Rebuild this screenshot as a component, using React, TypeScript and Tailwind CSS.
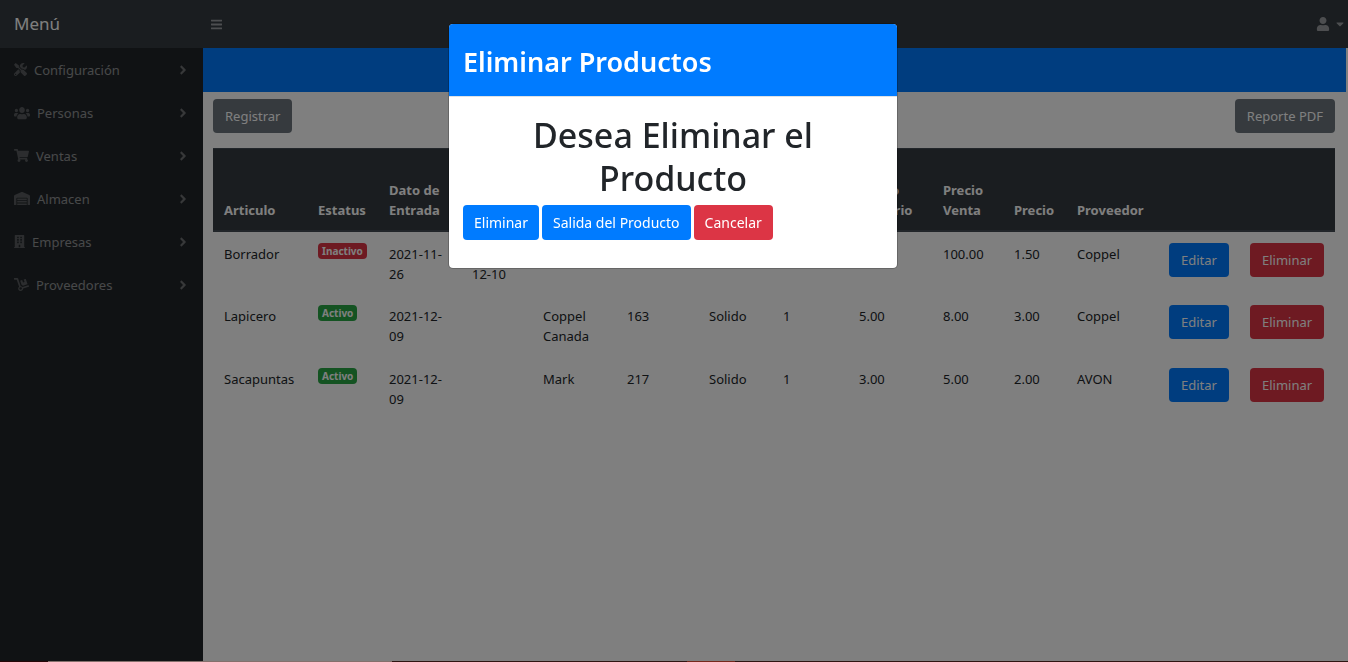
import React from 'react';
import {
  FaTools,
  FaUsers,
  FaShoppingCart,
  FaWarehouse,
  FaBuilding,
  FaDolly,
  FaAngleRight,
  FaBars,
  FaUser,
  FaCaretDown,
} from 'react-icons/fa';

const menu = [
  { label: 'Configuración', Icon: FaTools, size: 'h-[13px] w-[13px]' },
  { label: 'Personas', Icon: FaUsers, size: 'h-[14px] w-[16px]' },
  { label: 'Ventas', Icon: FaShoppingCart, size: 'h-[13px] w-[15px]' },
  { label: 'Almacen', Icon: FaWarehouse, size: 'h-[13px] w-[16px]' },
  { label: 'Empresas', Icon: FaBuilding, size: 'h-[13px] w-[11px]' },
  { label: 'Proveedores', Icon: FaDolly, size: 'h-[13px] w-[15px]' },
];

const columns = [
  { key: 'articulo', title: 'Articulo', width: 'w-[94px]' },
  { key: 'estatus', title: 'Estatus', width: 'w-[71px]' },
  { key: 'entrada', title: 'Dato de Entrada', width: 'w-[83px]' },
  { key: 'salida', title: '', width: 'w-[71px]' },
  { key: 'marca', title: '', width: 'w-[84px]' },
  { key: 'codigo', title: '', width: 'w-[82px]' },
  { key: 'tipo', title: '', width: 'w-[74px]' },
  { key: 'cantidad', title: '', width: 'w-[76px]' },
  { key: 'unitario', title: 'Precio Unitario', width: 'w-[84px]' },
  { key: 'venta', title: 'Precio Venta', width: 'w-[71px]' },
  { key: 'precio', title: 'Precio', width: 'w-[63px]' },
  { key: 'proveedor', title: 'Proveedor', width: 'w-[92px]' },
];

const rows = [
  { name: 'Borrador', active: false, cells: ['2021-11-26', '2021-12-10', '', '', '', '', '', '100.00', '1.50', 'Coppel'] },
  { name: 'Lapicero', active: true, cells: ['2021-12-09', '', 'Coppel Canada', '163', 'Solido', '1', '5.00', '8.00', '3.00', 'Coppel'] },
  { name: 'Sacapuntas', active: true, cells: ['2021-12-09', '', 'Mark', '217', 'Solido', '1', '3.00', '5.00', '2.00', 'AVON'] },
];

const tones = {
  primary: 'bg-[#007bff]',
  danger: 'bg-[#dc3545]',
  secondary: 'bg-[#6c757d]',
};

const sizes = {
  page: 'h-[34px] px-3',
  dialog: 'h-[35px] px-[11px] text-[14px]',
};

type ButtonProps = {
  tone: keyof typeof tones;
  size?: keyof typeof sizes;
  children: React.ReactNode;
};

function Button({ tone, size = 'page', children }: ButtonProps) {
  return (
    <button type="button" className={`rounded-[4px] whitespace-nowrap text-white ${sizes[size]} ${tones[tone]}`}>
      {children}
    </button>
  );
}

function Sidebar() {
  return (
    <nav className="w-[203px] shrink-0 bg-[#212529]">
      <ul className="flex flex-col">
        {menu.map(({ label, Icon, size }) => (
          <li key={label}>
            <a href="#" className="flex h-[43px] items-center gap-[7px] pr-4 pl-[14px] text-white/50">
              <Icon className={`shrink-0 text-white/25 ${size}`} preserveAspectRatio="none" />
              <span className="flex-1">{label}</span>
              <FaAngleRight className="h-[14px] w-2 shrink-0 text-white/35" />
            </a>
          </li>
        ))}
      </ul>
    </nav>
  );
}

function ProductTable() {
  return (
    <table className="w-full table-fixed text-left text-[#212529]">
      <thead className="bg-[#343a40] text-white">
        <tr className="h-[82px] border-t border-b-2 border-[#454d55]">
          {columns.map((column) => (
            <th key={column.key} className={`px-[11px] py-[10px] align-bottom font-bold ${column.width}`}>
              {column.title}
            </th>
          ))}
          <th className="w-[81px]" aria-label="Editar" />
          <th className="w-[96px]" aria-label="Eliminar" />
        </tr>
      </thead>
      <tbody>
        {rows.map((row) => (
          <tr key={row.name} className="h-[63px] align-top">
            <td className="px-[11px] pt-3">{row.name}</td>
            <td className="px-[11px] pt-[11px]">
              <span
                className={`block w-fit rounded-[4px] px-1 text-[10px] leading-4 font-bold text-white ${
                  row.active ? 'bg-[#28a745]' : 'bg-[#dc3545]'
                }`}
              >
                {row.active ? 'Activo' : 'Inactivo'}
              </span>
            </td>
            {row.cells.map((cell, index) => (
              <td key={index} className="px-[11px] pt-3">
                {cell}
              </td>
            ))}
            <td className="px-[11px] pt-[11px]">
              <Button tone="primary">Editar</Button>
            </td>
            <td className="px-[11px] pt-[11px]">
              <Button tone="danger">Eliminar</Button>
            </td>
          </tr>
        ))}
      </tbody>
    </table>
  );
}

function DeleteDialog() {
  return (
    <div className="fixed inset-0 flex items-start justify-center bg-black/50 pt-[23px] pr-[2px]">
      <div
        role="dialog"
        aria-modal="true"
        aria-labelledby="dialog-title"
        className="w-[450px] overflow-hidden rounded-[5px] border border-black/20 bg-white bg-clip-padding"
      >
        <header className="border-b border-[#dee2e6] bg-[#007bff] px-[14px] pt-4 pb-3">
          <h2 id="dialog-title" className="text-[27px] leading-[44px] font-semibold text-white">
            Eliminar Productos
          </h2>
        </header>
        <div className="px-[14px] pt-[17px] pb-7">
          <p className="px-8 pb-[5px] text-center text-[34px] leading-[43px] font-medium text-[#212529]">
            Desea Eliminar el Producto
          </p>
          <div className="flex gap-[3px]">
            <Button tone="primary" size="dialog">Eliminar</Button>
            <Button tone="primary" size="dialog">Salida del Producto</Button>
            <Button tone="danger" size="dialog">Cancelar</Button>
          </div>
        </div>
      </div>
    </div>
  );
}

function BottomEdge() {
  return (
    <div className="fixed inset-x-0 bottom-0 flex h-px bg-[#2e1512]">
      <div className="w-12 bg-[#260707]" />
      <div className="w-[344px] bg-[#84706c]" />
      <div className="w-[295px]" />
      <div className="w-12 bg-[#76281c]" />
    </div>
  );
}

export default function App() {
  return (
    <div className="flex min-h-screen flex-col bg-white font-['Noto_Sans','Open_Sans',sans-serif] text-[13px] leading-5">
      <header className="flex h-12 items-center bg-[#343a40] text-white/50">
        <a href="#" className="w-[203px] pl-[14px] text-[17px] text-white">
          Menú
        </a>
        <button type="button" aria-label="Alternar menú" className="px-2">
          <FaBars className="h-[13px] w-[11px]" />
        </button>
        <button type="button" aria-label="Usuario" className="ml-auto flex items-center gap-1 pr-[2px]">
          <FaUser className="h-[14px] w-[14px]" />
          <FaCaretDown className="h-3 w-3" />
        </button>
      </header>
      <div className="flex flex-1">
        <Sidebar />
        <main className="min-w-0 flex-1">
          <div className="mr-[2px] h-11 bg-[#007bff]" />
          <div className="pr-[13px] pl-[10px]">
            <div className="flex justify-between pt-[7px] pb-[15px]">
              <Button tone="secondary">Registrar</Button>
              <Button tone="secondary">Reporte PDF</Button>
            </div>
            <ProductTable />
          </div>
        </main>
      </div>
      <DeleteDialog />
      <BottomEdge />
    </div>
  );
}
